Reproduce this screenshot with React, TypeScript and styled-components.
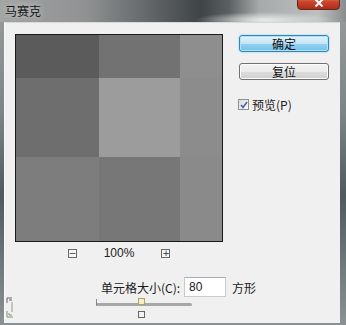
import React from 'react'
import styled, { createGlobalStyle } from 'styled-components'

const GlobalStyle = createGlobalStyle`
  html, body {
    margin: 0;
    padding: 0;
    background: #f0f0f0;
  }
  body {
    font-family: "Noto Sans CJK SC", "Noto Sans", sans-serif;
    font-size: 12px;
    color: #1a1a1a;
  }
`

const cells = [
  '#5b5b5b', '#727272', '#8e8e8e',
  '#6e6e6e', '#9c9c9c', '#8c8c8c',
  '#7d7d7d', '#777777', '#8a8a8a',
]

const Window = styled.div`
  position: relative;
  width: 346px;
  height: 325px;
  display: flex;
  flex-direction: column;
  background: linear-gradient(180deg, #9a9c9d 0%, #7d8486 35%, #4f5a5c 60%, #8b9294 100%);
  overflow: hidden;
`

const TitleBar = styled.div`
  position: relative;
  height: 22px;
  flex-shrink: 0;
  display: flex;
  align-items: center;
  padding-left: 5px;
  background:
    radial-gradient(ellipse 70px 8px at 265px 20px, rgba(235, 238, 238, 0.95), rgba(235, 238, 238, 0) 100%),
    linear-gradient(90deg, #a3a4a4 0%, #8f9192 25%, #5e6264 45%, #3f4446 58%, #5a5f61 66%, #a7aaab 75%, #bdbfbf 92%, #8a8d8e 100%);
`

const Title = styled.span`
  font-size: 12px;
  color: #161616;
  text-shadow: 0 0 6px rgba(255, 255, 255, 0.7);
  margin-top: -2px;
`

const CloseButton = styled.div`
  position: absolute;
  top: -5px;
  right: 6px;
  width: 43px;
  height: 15px;
  border-radius: 0 0 4px 4px;
  border: 1px solid #5a2a22;
  background: linear-gradient(180deg, #e48a78 0%, #c9462e 45%, #b22a14 100%);
  display: flex;
  align-items: flex-end;
  justify-content: center;
  padding-bottom: 2px;
  box-sizing: border-box;
`

const Client = styled.div`
  flex: 1;
  margin: 0 6px 2px 4px;
  background: #f0f0f0;
  border-top: 1px solid #d8d8d8;
  border-left: 1px solid #fafafa;
  display: flex;
  padding: 11px 0 0 10px;
  position: relative;
`

const LeftCol = styled.div`
  display: flex;
  flex-direction: column;
  width: 208px;
`

const Preview = styled.div`
  width: 206px;
  height: 206px;
  border: 1px solid #1a1a1a;
  display: grid;
  grid-template-columns: 83px 81px 42px;
  grid-template-rows: 43px 79px 84px;
`

const Cell = styled.div<{ $c: string }>`
  background: ${({ $c }) => $c};
`

const ZoomRow = styled.div`
  display: flex;
  align-items: center;
  justify-content: center;
  gap: 27px;
  margin-top: 5px;
  height: 12px;
  font-family: "Liberation Sans", sans-serif;
  font-size: 12px;
  color: #222;
`

const ZoomBox = styled.div`
  width: 7px;
  height: 7px;
  border: 1px solid #6a6a6a;
  background: #f4f4f4;
  font-size: 9px;
  line-height: 7px;
  text-align: center;
  font-family: "DejaVu Sans", sans-serif;
  color: #333;
`

const CellRow = styled.div`
  display: flex;
  align-items: center;
  margin: 18px 0 0 86px;
  width: 160px;
  white-space: nowrap;
`

const Label = styled.span`
  font-size: 12px;
  color: #1a1a1a;
`

const SizeInput = styled.div`
  width: 36px;
  height: 18px;
  margin-left: 4px;
  padding-left: 4px;
  border: 1px solid #c8ccd0;
  border-top-color: #abadb3;
  background: #fff;
  font-family: "Liberation Sans", sans-serif;
  font-size: 12px;
  line-height: 18px;
`

const Unit = styled.span`
  margin-left: 6px;
`

const Slider = styled.div`
  position: relative;
  width: 96px;
  height: 20px;
  margin-left: 81px;
`

const Track = styled.div`
  position: absolute;
  left: 0;
  right: 0;
  top: 6px;
  height: 3px;
  background: #a8a8a8;
  border-radius: 2px;
  border-left: 1px solid #777;
  &::before {
    content: '';
    position: absolute;
    left: -1px;
    top: -4px;
    width: 1px;
    height: 5px;
    background: #888;
  }
`

const Thumb = styled.div<{ $top: number }>`
  position: absolute;
  left: 42px;
  top: ${({ $top }) => $top}px;
  width: 5px;
  height: 5px;
  border: 1px solid ${({ $top }) => ($top < 2 ? '#b0a070' : '#666')};
  background: ${({ $top }) => ($top < 2 ? '#f4eec0' : '#f2f2f2')};
`

const RightCol = styled.div`
  display: flex;
  flex-direction: column;
  margin-left: 16px;
  padding-top: 1px;
`

const Button = styled.div<{ $primary?: boolean }>`
  width: 88px;
  height: 15px;
  border: 1px solid ${({ $primary }) => ($primary ? '#3c7fb1' : '#707070')};
  border-radius: 3px;
  background: ${({ $primary }) =>
    $primary
      ? 'linear-gradient(180deg, #e5f4fc 0%, #c4e5f6 50%, #98d1ef 51%, #6fc3ea 100%)'
      : 'linear-gradient(180deg, #f2f2f2 0%, #ebebeb 50%, #dddddd 51%, #cfcfcf 100%)'};
  box-shadow: ${({ $primary }) => ($primary ? '0 0 2px #6fd0f5, inset 0 0 0 1px #aee4fb' : 'inset 0 0 0 1px #fbfbfb')};
  display: flex;
  align-items: center;
  justify-content: center;
  font-size: 12px;
  color: #111;
  margin-bottom: 11px;
`

const CheckRow = styled.div`
  display: flex;
  align-items: center;
  gap: 3px;
  margin-top: 5px;
  margin-left: -1px;
`

const CheckBox = styled.div`
  width: 9px;
  height: 9px;
  border: 1px solid #8f8f8f;
  background: linear-gradient(135deg, #dcdcdc, #fafafa);
  display: flex;
  align-items: center;
  justify-content: center;
`

const Grip = styled.svg`
  position: absolute;
  left: 0;
  bottom: 4px;
`

export default function App() {
  return (
    <>
      <GlobalStyle />
      <Window>
        <TitleBar>
          <Title>马赛克</Title>
          <CloseButton>
            <svg width="10" height="8" viewBox="0 0 10 8">
              <path d="M1.5 0.5 L8.5 7.5 M8.5 0.5 L1.5 7.5" stroke="#fff" strokeWidth="2" />
            </svg>
          </CloseButton>
        </TitleBar>
        <Client>
          <LeftCol>
            <Preview>
              {cells.map((c, i) => (
                <Cell key={i} $c={c} />
              ))}
            </Preview>
            <ZoomRow>
              <ZoomBox>−</ZoomBox>
              <span>100%</span>
              <ZoomBox>+</ZoomBox>
            </ZoomRow>
            <CellRow>
              <Label>单元格大小(C):</Label>
              <SizeInput>80</SizeInput>
              <Unit>方形</Unit>
            </CellRow>
            <Slider>
              <Track />
              <Thumb $top={1} />
              <Thumb $top={14} />
            </Slider>
          </LeftCol>
          <RightCol>
            <Button $primary>确定</Button>
            <Button>复位</Button>
            <CheckRow>
              <CheckBox>
                <svg width="8" height="8" viewBox="0 0 8 8">
                  <path d="M1 4 L3 6.5 L7 1" stroke="#4a5fa8" strokeWidth="1.6" fill="none" />
                </svg>
              </CheckBox>
              <Label>预览(P)</Label>
            </CheckRow>
          </RightCol>
          <Grip width="10" height="22" viewBox="0 0 10 22">
            <path d="M2 1 H7 M2 1 V6 M4 3 H7" stroke="#666" strokeWidth="1" fill="none" />
            <path d="M7 5 V15" stroke="#999" strokeWidth="1" fill="none" />
            <path d="M2 14 V20 H8 M4 16 V18 H7" stroke="#7a9a70" strokeWidth="1" fill="none" />
          </Grip>
        </Client>
      </Window>
    </>
  )
}
